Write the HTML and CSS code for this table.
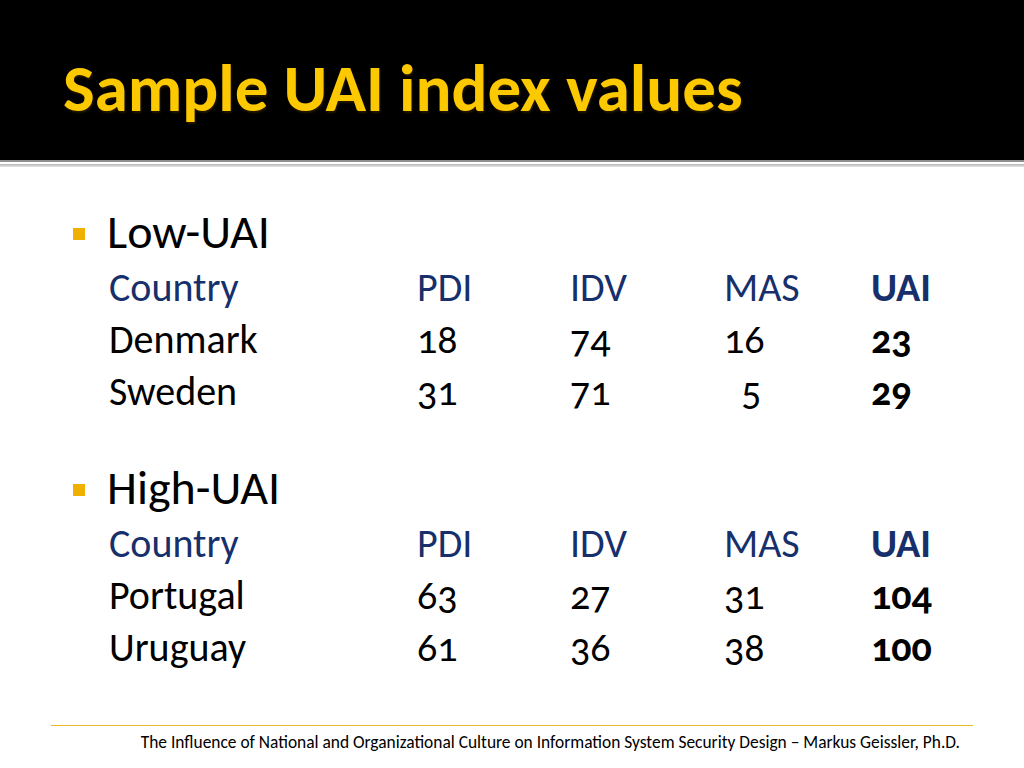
FILE: index.html
```html
<!DOCTYPE html>
<html lang="en">
<head>
<meta charset="utf-8">
<title>Sample UAI index values</title>
<link rel="stylesheet" href="styles.css">
</head>
<body>
<div class="slide">
  <header class="title-bar">
    <h1 class="title">Sample UAI index values</h1>
  </header>
  <div class="rule-thin"></div>
  <div class="rule-thick"></div>
  <main class="content">
    <section class="group">
      <div class="bullet"><span class="square"></span><span class="bullet-text">Low-UAI</span></div>
      <div class="table">
        <span class="th">Country</span><span class="th">PDI</span><span class="th">IDV</span><span class="th">MAS</span><span class="th strong">UAI</span>
        <span>Denmark</span><span>18</span><span>74</span><span>16</span><span class="strong">23</span>
        <span>Sweden</span><span>31</span><span>71</span><span class="indent">5</span><span class="strong">29</span>
      </div>
    </section>
    <section class="group group-second">
      <div class="bullet"><span class="square"></span><span class="bullet-text">High-UAI</span></div>
      <div class="table">
        <span class="th">Country</span><span class="th">PDI</span><span class="th">IDV</span><span class="th">MAS</span><span class="th strong">UAI</span>
        <span>Portugal</span><span>63</span><span>27</span><span>31</span><span class="strong">104</span>
        <span>Uruguay</span><span>61</span><span>36</span><span>38</span><span class="strong">100</span>
      </div>
    </section>
  </main>
  <footer class="footer">
    <div class="footer-line"></div>
    <p class="footer-text">The Influence of National and Organizational Culture on Information System Security Design – Markus Geissler, Ph.D.</p>
  </footer>
</div>
</body>
</html>
```

FILE: styles.css
```css
html, body {
  margin: 0;
  padding: 0;
  background: #ffffff;
}
body {
  font-family: Carlito, Lato, "Open Sans", sans-serif;
  font-variant-numeric: oldstyle-nums;
}
.slide {
  width: 1024px;
  height: 768px;
  overflow: hidden;
  display: flex;
  flex-direction: column;
  background: #ffffff;
}
.title-bar {
  height: 160px;
  background: #000000;
  display: flex;
  align-items: flex-start;
}
.title {
  margin: 0;
  padding: 52px 0 0 63px;
  font-size: 67px;
  line-height: 72px;
  font-weight: 700;
  color: #fcc800;
  text-shadow: 1px 2px 2px rgba(60, 40, 0, 0.6);
}
.rule-thin {
  height: 2px;
  background: #8f8f8f;
}
.rule-thick {
  margin-top: 2px;
  height: 3px;
  background: linear-gradient(#b4b4b4, #e6e6e6);
}
.content {
  padding: 35px 0 0 73px;
  flex: 1;
}
.group-second {
  margin-top: 40px;
}
.bullet {
  display: flex;
  align-items: center;
  height: 60px;
}
.square {
  width: 12px;
  height: 12px;
  background: #f0b000;
  margin-right: 22px;
  margin-top: 4px;
}
.bullet-text {
  font-size: 48px;
  line-height: 60px;
  color: #000000;
}
.table {
  display: grid;
  grid-template-columns: 308px 153px 154px 147px auto;
  margin-left: 36px;
  font-size: 40px;
  line-height: 52px;
  color: #000000;
}
.th {
  color: #172f6b;
}
.strong {
  font-weight: 700;
}
.indent {
  padding-left: 17px;
}
.footer {
  height: 43px;
  display: flex;
  flex-direction: column;
}
.footer-line {
  margin: 0 51px 0 51px;
  height: 1px;
  background: #e9bd2c;
}
.footer-text {
  margin: 6px 64px 0 0;
  text-align: right;
  font-size: 17.4px;
  line-height: 20px;
  color: #000000;
  font-variant-numeric: normal;
}
```
